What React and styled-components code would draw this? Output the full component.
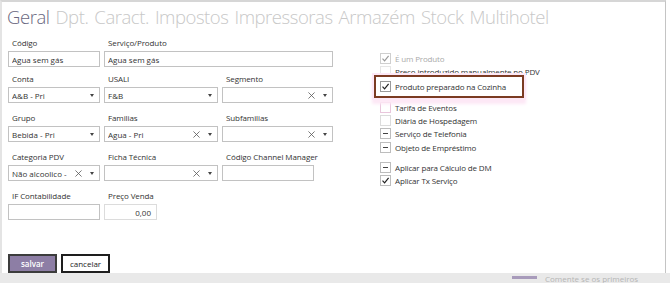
import React from "react";
import styled, { createGlobalStyle } from "styled-components";

const Global = createGlobalStyle`
  html, body { margin: 0; padding: 0; background: #fff; }
  body { font-family: "Open Sans", "Noto Sans", sans-serif; color: #333; }
`;

const Frame = styled.div`
  width: 670px;
  height: 283px;
  position: relative;
  overflow: hidden;
  display: flex;
  flex-direction: column;
  background: #fff;
`;

const Dialog = styled.div`
  width: 666px;
  height: 278px;
  box-sizing: border-box;
  border-top: 2px solid #d6d6d6;
  border-right: 1px solid #c4c4c4;
  border-left: 2px solid #e4e4e4;
  display: flex;
  flex-direction: column;
`;

const Tabs = styled.div`
  display: flex;
  gap: 6px;
  padding: 2px 0 0 5px;
  height: 33px;
  box-sizing: border-box;
`;

const Tab = styled.span`
  font-size: 18.5px;
  font-weight: 300;
  line-height: 26px;
  color: ${(p) => (p.$active ? "#6a6780" : "#c8c8c8")};
  letter-spacing: -0.45px;
`;

const Body = styled.div`
  display: flex;
  padding-left: 6px;
`;

const Form = styled.div`
  display: flex;
  flex-direction: column;
  width: 326px;
  padding-top: 2px;
`;

const Row = styled.div`
  display: grid;
  grid-template-columns: 92px 114px 111px;
  column-gap: 4px;
  margin-top: ${(p) => p.$mt || 0}px;
`;

const Field = styled.div`
  display: flex;
  flex-direction: column;
  gap: 2px;
  grid-column: ${(p) => p.$span || "auto"};
`;

const Label = styled.div`
  font-size: 8px;
  line-height: 12px;
  padding-left: 4px;
  color: #333;
  white-space: nowrap;
  letter-spacing: -0.1px;
`;

const Box = styled.div`
  height: 16px;
  box-sizing: border-box;
  border: 1px solid ${(p) => (p.$light ? "#dcdcdc" : "#c2c2c2")};
  display: flex;
  align-items: center;
  padding: 0 5px 0 3px;
  font-size: 8px;
  color: #333;
  width: ${(p) => (p.$w ? p.$w + "px" : "auto")};
  justify-content: ${(p) => (p.$right ? "flex-end" : "flex-start")};
  background: #fff;
`;

const Value = styled.span`
  flex: 1;
  white-space: nowrap;
  overflow: hidden;
`;

const Clear = styled.svg`
  width: 7px;
  height: 7px;
  margin-right: 8px;
  flex: none;
`;

const Arrow = styled.span`
  width: 0;
  height: 0;
  border-left: 2.5px solid transparent;
  border-right: 2.5px solid transparent;
  border-top: 3px solid #444;
  flex: none;
`;

const X = () => (
  <Clear viewBox="0 0 8 8">
    <path d="M0.5 0.5 L7.5 7.5 M7.5 0.5 L0.5 7.5" stroke="#555" strokeWidth="0.9" fill="none" />
  </Clear>
);

const Select = ({ value, clear }) => (
  <Box>
    <Value>{value}</Value>
    {clear && <X />}
    <Arrow />
  </Box>
);

const Buttons = styled.div`
  display: flex;
  gap: 4px;
  margin-top: 34px;
`;

const Button = styled.button`
  width: 49px;
  height: 19px;
  box-sizing: border-box;
  border: 2px solid ${(p) => (p.$primary ? "#3c3c3c" : "#1e1e1e")};
  background: ${(p) => (p.$primary ? "#8d7ea5" : "#fff")};
  color: ${(p) => (p.$primary ? "#fff" : "#222")};
  font-family: "Open Sans", sans-serif;
  font-size: 8px;
  font-weight: ${(p) => (p.$primary ? 600 : 500)};
  padding: 0;
`;

const Checks = styled.div`
  display: flex;
  flex-direction: column;
  margin-left: 46px;
  padding-top: 17px;
`;

const CheckRow = styled.div`
  display: flex;
  align-items: center;
  gap: 4px;
  height: 13.3px;
  margin-top: ${(p) => p.$mt || 0}px;
  font-size: 8px;
  letter-spacing: -0.15px;
  color: ${(p) => (p.$disabled ? "#aaa" : "#333")};
  white-space: nowrap;
`;

const Square = styled.span`
  width: 11px;
  height: 11px;
  box-sizing: border-box;
  border: 1px solid ${(p) => p.$border || "#9a9a9a"};
  background: #fff;
  display: flex;
  align-items: center;
  justify-content: center;
  flex: none;
`;

const Dash = styled.span`
  width: 5px;
  height: 1px;
  background: #444;
`;

const Tick = ({ color }) => (
  <svg width="9" height="9" viewBox="0 0 9 9">
    <path d="M1.5 4.6 L3.6 6.8 L7.6 1.8" stroke={color} strokeWidth="1.2" fill="none" />
  </svg>
);

const Highlight = styled.div`
  width: 150px;
  height: 23px;
  box-sizing: border-box;
  margin: -4px 0 0 -6px;
  padding-left: 4px;
  border: 2px solid #7b3b22;
  display: flex;
  align-items: center;
  box-shadow: 0 0 0 2px #fde8f6, 0 4px 3px 2px #fde8f6;
  position: relative;
`;

const Check = ({ state, disabled, border, children, mt }) => (
  <CheckRow $disabled={disabled} $mt={mt}>
    <Square $border={border}>
      {state === "on" && <Tick color={disabled ? "#999" : "#222"} />}
      {state === "mixed" && <Dash />}
    </Square>
    {children}
  </CheckRow>
);

const Bottom = styled.div`
  flex: 1;
  background: #e9e9e9;
  display: flex;
  align-items: flex-start;
  padding-left: 512px;
  gap: 8px;
`;

const Chip = styled.span`
  width: 25px;
  height: 3px;
  margin-top: 3px;
  background: #a89bbb;
`;

const Faint = styled.span`
  font-size: 8px;
  color: #b5b5b5;
  line-height: 10px;
  margin-top: 1px;
  white-space: nowrap;
`;

export default function App() {
  return (
    <Frame>
      <Global />
      <Dialog>
        <Tabs>
          <Tab $active>Geral</Tab>
          <Tab>Dpt.</Tab>
          <Tab>Caract.</Tab>
          <Tab>Impostos</Tab>
          <Tab>Impressoras</Tab>
          <Tab>Armazém</Tab>
          <Tab>Stock</Tab>
          <Tab>Multihotel</Tab>
        </Tabs>
        <Body>
          <Form>
            <Row>
              <Field>
                <Label>Código</Label>
                <Box><Value>Agua sem gás</Value></Box>
              </Field>
              <Field $span="2 / 4">
                <Label>Serviço/Produto</Label>
                <Box><Value>Agua sem gás</Value></Box>
              </Field>
            </Row>
            <Row $mt={6}>
              <Field>
                <Label>Conta</Label>
                <Select value="A&B - Pri" />
              </Field>
              <Field>
                <Label>USALI</Label>
                <Select value="F&B" />
              </Field>
              <Field>
                <Label>Segmento</Label>
                <Select value="" clear />
              </Field>
            </Row>
            <Row $mt={9}>
              <Field>
                <Label>Grupo</Label>
                <Select value="Bebida - Pri" />
              </Field>
              <Field>
                <Label>Familias</Label>
                <Select value="Agua - Pri" clear />
              </Field>
              <Field>
                <Label>Subfamilias</Label>
                <Select value="" clear />
              </Field>
            </Row>
            <Row $mt={9}>
              <Field>
                <Label>Categoria PDV</Label>
                <Select value="Não alcoolico - " clear />
              </Field>
              <Field>
                <Label>Ficha Técnica</Label>
                <Select value="" clear />
              </Field>
              <Field>
                <Label>Código Channel Manager</Label>
                <Box $w={92} />
              </Field>
            </Row>
            <Row $mt={9}>
              <Field>
                <Label>IF Contabilidade</Label>
                <Box />
              </Field>
              <Field>
                <Label>Preço Venda</Label>
                <Box $w={53} $right $light>0,00</Box>
              </Field>
            </Row>
            <Buttons>
              <Button $primary>salvar</Button>
              <Button>cancelar</Button>
            </Buttons>
          </Form>
          <Checks>
            <Check state="on" disabled border="#cfcfcf">É um Produto</Check>
            <Check border="#e6e6e6">Preço introduzido manualmente no PDV</Check>
            <Highlight>
              <Check state="on">Produto preparado na Cozinha</Check>
            </Highlight>
            <Check mt={3} border="#e9c6dc">Tarifa de Eventos</Check>
            <Check border="#dcdcdc">Diária de Hospedagem</Check>
            <Check state="mixed" border="#bdbdbd">Serviço de Telefonia</Check>
            <Check state="mixed" border="#bdbdbd">Objeto de Empréstimo</Check>
            <Check state="mixed" border="#bdbdbd" mt={7}>Aplicar para Cálculo de DM</Check>
            <Check state="on" border="#bdbdbd">Aplicar Tx Serviço</Check>
          </Checks>
        </Body>
      </Dialog>
      <Bottom>
        <Chip />
        <Faint>Comente se os primeiros</Faint>
      </Bottom>
    </Frame>
  );
}
